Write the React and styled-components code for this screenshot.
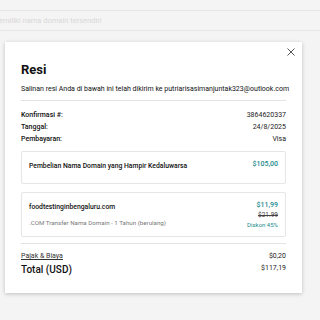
import React from 'react';
import styled, { createGlobalStyle } from 'styled-components';

const GlobalStyle = createGlobalStyle`
    html, body {
        margin: 0;
        padding: 0;
        background: #f4f4f4;
        font-family: Roboto, "Liberation Sans", Arial, sans-serif;
    }
`;

const Page = styled.div`
    width: 320px;
    height: 320px;
    overflow: hidden;
    display: flex;
    flex-direction: column;
    padding-top: 10px;
    box-sizing: border-box;
`;

const Strip = styled.div`
    height: 19px;
    border-top: 1px solid #e6e6e6;
    border-bottom: 1px solid #e6e6e6;
    font-size: 7.5px;
    line-height: 19px;
    color: #d8d8d8;
    white-space: nowrap;
    margin-left: -1px;
`;

const Modal = styled.div`
    position: relative;
    margin: 11px 0 0 5px;
    width: 297px;
    box-sizing: border-box;
    background: #fff;
    box-shadow: 0 1px 4px rgba(0, 0, 0, 0.22);
    padding: 20px 16px 16px;
`;

const Close = styled.button`
    position: absolute;
    top: 5px;
    right: 6px;
    width: 10px;
    height: 10px;
    padding: 0;
    border: none;
    background: none;
    display: flex;
    align-items: center;
    justify-content: center;
`;

const Title = styled.h1`
    margin: 0;
    font-size: 13px;
    line-height: 16px;
    font-weight: 700;
    color: #111;
`;

const Lead = styled.p`
    margin: 6px 0 0;
    font-size: 7px;
    line-height: 10px;
    color: #111;
    white-space: nowrap;
`;

const Divider = styled.hr`
    margin: ${props => props.gap}px 0 0;
    border: none;
    border-top: 1px solid #e3e3e3;
`;

const Details = styled.div`
    margin-top: 8px;
    display: flex;
    flex-direction: column;
`;

const Row = styled.div`
    display: flex;
    justify-content: space-between;
    align-items: flex-start;
    font-size: 7px;
    line-height: 12px;
    color: #222;
`;

const Label = styled.span`
    font-weight: 500;
    color: #111;
`;

const Card = styled.div`
    margin-top: ${props => props.gap}px;
    border: 1px solid #e6e6e6;
    border-radius: 2px;
    padding: ${props => props.pad};
    display: flex;
    justify-content: space-between;
    align-items: flex-start;
`;

const ItemName = styled.div`
    margin-top: 2px;
    font-size: 6.8px;
    line-height: 10px;
    font-weight: 500;
    color: #111;
    white-space: nowrap;
`;

const ItemSub = styled.div`
    margin-top: 6px;
    font-size: 6.2px;
    line-height: 10px;
    color: #7a7a7a;
    white-space: nowrap;
`;

const Prices = styled.div`
    display: flex;
    flex-direction: column;
    align-items: flex-end;
`;

const Price = styled.div`
    font-size: 7px;
    line-height: 10px;
    font-weight: 500;
    color: #1b8b8e;
`;

const OldPrice = styled.div`
    font-size: 6.5px;
    line-height: 10px;
    color: #444;
    text-decoration: line-through;
`;

const Discount = styled.div`
    font-size: 6px;
    line-height: 10px;
    color: #1b8b8e;
`;

const Fee = styled(Row)`
    margin-top: 7px;
    line-height: 10px;
`;

const FeeLabel = styled.span`
    text-decoration: underline;
    color: #333;
`;

const TotalRow = styled(Row)`
    margin-top: 2px;
    line-height: 10px;
`;

const TotalLabel = styled.span`
    font-size: 10px;
    line-height: 14px;
    font-weight: 500;
    color: #111;
`;

export default function App() {
    return (
        <>
            <GlobalStyle />
            <Page>
                <Strip>emiliki nama domain tersendiri</Strip>
                <Modal>
                    <Close aria-label="Tutup">
                        <svg width="8" height="8" viewBox="0 0 8 8">
                            <path d="M0.5 0.5L7.5 7.5M7.5 0.5L0.5 7.5" stroke="#555" strokeWidth="1" />
                        </svg>
                    </Close>
                    <Title>Resi</Title>
                    <Lead>Salinan resi Anda di bawah ini telah dikirim ke putriarisasimanjuntak323@outlook.com</Lead>
                    <Divider gap={6} />
                    <Details>
                        <Row><Label>Konfirmasi #:</Label><span>3864620337</span></Row>
                        <Row><Label>Tanggal:</Label><span>24/8/2025</span></Row>
                        <Row><Label>Pembayaran:</Label><span>Visa</span></Row>
                    </Details>
                    <Card gap={6} pad="7px 7px 12px">
                        <ItemName>Pembelian Nama Domain yang Hampir Kedaluwarsa</ItemName>
                        <Price>$105,00</Price>
                    </Card>
                    <Card gap={8} pad="7px 7px 6px">
                        <div>
                            <ItemName>foodtestinginbengaluru.com</ItemName>
                            <ItemSub>.COM Transfer Nama Domain - 1 Tahun (berulang)</ItemSub>
                        </div>
                        <Prices>
                            <Price>$11,99</Price>
                            <OldPrice>$21.99</OldPrice>
                            <Discount>Diskon 45%</Discount>
                        </Prices>
                    </Card>
                    <Divider gap={6} />
                    <Fee><FeeLabel>Pajak &amp; Biaya</FeeLabel><span>$0,20</span></Fee>
                    <TotalRow><TotalLabel>Total (USD)</TotalLabel><span>$117,19</span></TotalRow>
                </Modal>
            </Page>
        </>
    );
}
